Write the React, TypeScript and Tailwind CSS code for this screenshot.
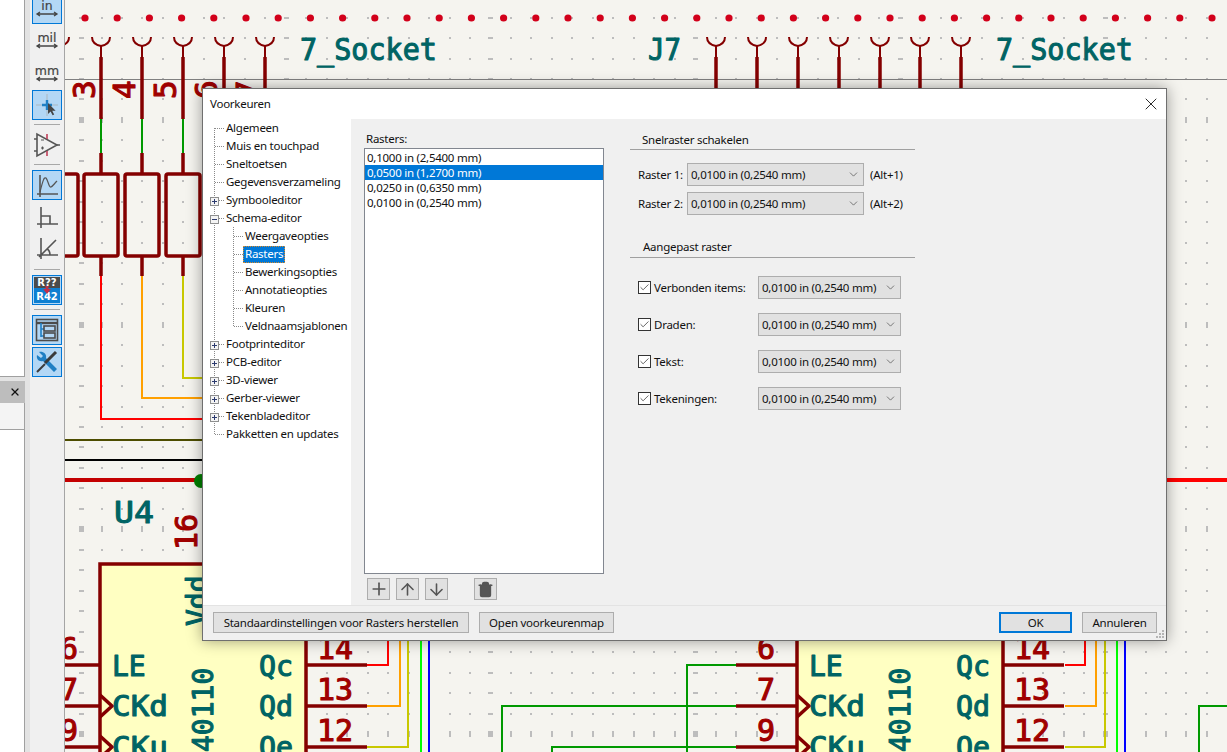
import { Check, ChevronDown, Plus, ArrowUp, ArrowDown, Trash2, X } from 'lucide-react';

const UI_FONT = "font-['Noto_Sans',sans-serif]";
const RED = '#840000';
const LABEL = '#006464';
const PIN_TEXT = '#a00000';
const MONO = "'DejaVu Sans Mono', monospace";

const treeRows = [
  { label: 'Algemeen', level: 0 },
  { label: 'Muis en touchpad', level: 0 },
  { label: 'Sneltoetsen', level: 0 },
  { label: 'Gegevensverzameling', level: 0 },
  { label: 'Symbooleditor', level: 0, box: 'plus' },
  { label: 'Schema-editor', level: 0, box: 'minus' },
  { label: 'Weergaveopties', level: 1 },
  { label: 'Rasters', level: 1, selected: true },
  { label: 'Bewerkingsopties', level: 1 },
  { label: 'Annotatieopties', level: 1 },
  { label: 'Kleuren', level: 1 },
  { label: 'Veldnaamsjablonen', level: 1, last: true },
  { label: 'Footprinteditor', level: 0, box: 'plus' },
  { label: 'PCB-editor', level: 0, box: 'plus' },
  { label: '3D-viewer', level: 0, box: 'plus' },
  { label: 'Gerber-viewer', level: 0, box: 'plus' },
  { label: 'Tekenbladeditor', level: 0, box: 'plus' },
  { label: 'Pakketten en updates', level: 0, last: true },
];

const gridSizes = [
  { text: '0,1000 in (2,5400 mm)' },
  { text: '0,0500 in (1,2700 mm)', selected: true },
  { text: '0,0250 in (0,6350 mm)' },
  { text: '0,0100 in (0,2540 mm)' },
];

const GRID_VALUE = '0,0100 in (0,2540 mm)';

const TreeGutter = ({ row, index }: { row: (typeof treeRows)[number]; index: number }) => {
  const dots = { stroke: '#8a8a8a', strokeDasharray: '1 1', shapeRendering: 'crispEdges' as const };
  const width = row.level === 0 ? 23 : 42;
  return (
    <svg width={width} height={18} className="shrink-0">
      {/* x=11 is the root trunk, it stops at the last root row */}
      {row.level === 1 || !row.last ? <line x1="11.5" y1={index === 0 ? 9 : 0} x2="11.5" y2="18" {...dots} /> : <line x1="11.5" y1="0" x2="11.5" y2="9" {...dots} />}
      {row.level === 0 && <line x1="12" y1="9.5" x2="21" y2="9.5" {...dots} />}
      {row.level === 1 && (
        <>
          <line x1="30.5" y1="0" x2="30.5" y2={row.last ? 9 : 18} {...dots} />
          <line x1="31" y1="9.5" x2="40" y2="9.5" {...dots} />
        </>
      )}
      {row.box && (
        <g shapeRendering="crispEdges">
          <rect x="7.5" y="6.5" width="8" height="8" fill="#f4f4f4" stroke="#8e8f8f" />
          <line x1="9" y1="10.5" x2="14" y2="10.5" stroke="#2b3a6e" />
          {row.box === 'plus' && <line x1="11.5" y1="8" x2="11.5" y2="13" stroke="#2b3a6e" />}
        </g>
      )}
    </svg>
  );
};

const TreePanel = () => (
  <div className="w-[148px] shrink-0 bg-white">
    {treeRows.map((row, idx) => (
      <div key={row.label} className="flex h-[18px] items-center whitespace-nowrap">
        <TreeGutter row={row} index={idx} />
        <span
          className={
            row.selected
              ? '-ml-[2px] flex h-[17px] items-center border border-dotted border-[#d98a2b] bg-[#0078d7] px-px text-white'
              : ''
          }
        >
          {row.label}
        </span>
      </div>
    ))}
  </div>
);

const Select = ({ width }: { width: string }) => (
  <div className={`flex h-[23px] items-center justify-between border border-[#adadad] bg-[#e1e1e1] pl-[3px] pr-[3px] ${width}`}>
    <span className="whitespace-nowrap pt-px">{GRID_VALUE}</span>
    <ChevronDown size={13} strokeWidth={1.25} className="text-[#444]" />
  </div>
);

const SectionTitle = ({ children, className }: { children: string; className: string }) => (
  <div className={`w-[285px] border-b border-[#a0a0a0] ${className}`}>{children}</div>
);

const CheckRow = ({ label }: { label: string }) => (
  <div className="flex h-[23px] items-center">
    <span className="ml-2 flex h-[13px] w-[13px] shrink-0 items-center justify-center border border-[#333] bg-white">
      <Check size={11} strokeWidth={1.5} className="text-[#222]" />
    </span>
    <span className="ml-[3px] w-[104px] whitespace-nowrap pt-px">{label}</span>
    <Select width="w-[143px]" />
  </div>
);

const IconButton = ({ children, className }: { children: React.ReactNode; className?: string }) => (
  <div className={`flex h-[22px] w-[23px] items-center justify-center border border-[#adadad] bg-[#e1e1e1] text-[#555] ${className ?? ''}`}>
    {children}
  </div>
);

const FooterButton = ({ label, className }: { label: string; className: string }) => (
  <div className={`flex h-[21px] items-center justify-center bg-[#e1e1e1] pt-px whitespace-nowrap ${className}`}>
    {label}
  </div>
);

const Dialog = () => (
  <div
    className={`absolute left-[202px] top-[88px] flex h-[553px] w-[965px] flex-col border border-[#6f6f6f] bg-[#f0f0f0] text-[11.5px] leading-none text-[#111] shadow-[0_0_14px_rgba(0,0,0,0.38)] ${UI_FONT} tracking-[-0.25px]`}
  >
    <div className="flex h-[30px] shrink-0 items-center justify-between bg-white pl-[7px] pr-[5px]">
      <span>Voorkeuren</span>
      <X size={20} strokeWidth={1} className="text-black" />
    </div>
    <div className="flex min-h-0 flex-1">
      <TreePanel />
      <div className="flex flex-1">
        <div className="ml-[13px] w-[240px] pt-[14px]">
          <div className="h-[15px] pl-[2px]">Rasters:</div>
          <div className="h-[426px] border border-[#828790] bg-white pt-px">
            {gridSizes.map((item) => (
              <div
                key={item.text}
                className={`flex h-[15px] items-center whitespace-nowrap pl-[2px] ${item.selected ? 'bg-[#0078d7] text-white' : ''}`}
              >
                {item.text}
              </div>
            ))}
          </div>
          <div className="mt-[4px] flex pl-[3px]">
            <IconButton>
              <Plus size={20} strokeWidth={2} />
            </IconButton>
            <IconButton className="ml-[6px]">
              <ArrowUp size={19} strokeWidth={2} />
            </IconButton>
            <IconButton className="ml-[6px]">
              <ArrowDown size={19} strokeWidth={2} />
            </IconButton>
            <IconButton className="ml-[26px]">
              <Trash2 size={17} strokeWidth={2} fill="#555" />
            </IconButton>
          </div>
        </div>
        <div className="ml-[26px] w-[285px]">
          <SectionTitle className="mt-[15px] h-[16px] pl-3">Snelraster schakelen</SectionTitle>
          <div className="mt-[13px] flex h-[23px] items-center">
            <span className="w-[57px] pl-2 pt-px whitespace-nowrap">Raster 1:</span>
            <Select width="w-[177px]" />
            <span className="ml-[6px] pt-px whitespace-nowrap">(Alt+1)</span>
          </div>
          <div className="mt-[6px] flex h-[23px] items-center">
            <span className="w-[57px] pl-2 pt-px whitespace-nowrap">Raster 2:</span>
            <Select width="w-[177px]" />
            <span className="ml-[6px] pt-px whitespace-nowrap">(Alt+2)</span>
          </div>
          <SectionTitle className="mt-[26px] h-[17px] pl-[13px]">Aangepast raster</SectionTitle>
          <div className="mt-[18px] flex flex-col gap-[14px]">
            <CheckRow label="Verbonden items:" />
            <CheckRow label="Draden:" />
            <CheckRow label="Tekst:" />
            <CheckRow label="Tekeningen:" />
          </div>
        </div>
      </div>
    </div>
    <div className="relative flex h-[35px] shrink-0 items-start border-t border-[#e3e3e3] pl-[10px] pr-[9px] pt-[6px]">
      <FooterButton label="Standaardinstellingen voor Rasters herstellen" className="w-[256px] border border-[#adadad]" />
      <FooterButton label="Open voorkeurenmap" className="ml-[10px] w-[135px] border border-[#adadad]" />
      <div className="flex-1" />
      <FooterButton label="OK" className="w-[73px] border-2 border-[#0078d7]" />
      <FooterButton label="Annuleren" className="ml-[10px] w-[75px] border border-[#adadad]" />
      <svg width="9" height="9" className="absolute bottom-px right-px" fill="#b5b5b5">
        <rect x="6" y="0" width="2" height="2" />
        <rect x="3" y="3" width="2" height="2" />
        <rect x="6" y="3" width="2" height="2" />
        <rect x="0" y="6" width="2" height="2" />
        <rect x="3" y="6" width="2" height="2" />
        <rect x="6" y="6" width="2" height="2" />
      </svg>
    </div>
  </div>
);

const ToolSlot = ({ active, height, children }: { active?: boolean; height: string; children: React.ReactNode }) => (
  <div className={`mx-[2px] flex w-[30px] items-center justify-center ${height} ${active ? 'border border-[#0078d7] bg-[#b3d7f5]' : ''}`}>
    {children}
  </div>
);

const UnitIcon = ({ text }: { text: string }) => (
  <svg width="26" height="26" viewBox="0 0 26 26" fill="#444" stroke="#444">
    <text x="13" y="14" textAnchor="middle" fontSize="12.5" stroke="#444" strokeWidth="0.2" fontFamily="'DejaVu Sans', sans-serif">
      {text}
    </text>
    <path d="M3 18h20M6 16 3 18l3 2M20 16l3 2-3 2" fill="none" strokeWidth="1.3" />
  </svg>
);

const Toolbar = () => (
  <div className="flex w-[35px] shrink-0 flex-col items-center overflow-hidden border-r border-[#a5a5a5] bg-[#f0f0f0]">
    <div className="-mt-[6px] flex flex-col">
      <ToolSlot active height="h-[30px]">
        <UnitIcon text="in" />
      </ToolSlot>
      <ToolSlot height="h-[33px]">
        <UnitIcon text="mil" />
      </ToolSlot>
      <ToolSlot height="h-[33px]">
        <UnitIcon text="mm" />
      </ToolSlot>
      <ToolSlot active height="h-[30px]">
        <svg width="26" height="26" viewBox="0 0 26 26">
          <path d="M13 2v22M2 13h22" stroke="#aaa" strokeWidth="0.7" />
          <path d="M13 8v10M8 13h10" stroke="#1f7fc4" strokeWidth="2.4" />
          <path d="M14 11v11l2.6-2.4 2 3.6 1.6-.8-2-3.6h3.4z" fill="#444" />
        </svg>
      </ToolSlot>
      <div className="mx-[4px] mt-[4px] h-px bg-[#a8a8a8]" />
      <div className="flex h-[39px] items-center justify-center">
        <svg width="28" height="28" viewBox="0 0 28 28" fill="none" stroke="#555" strokeWidth="1.6">
          <path d="M4 3v22l20-11z" />
          <path d="M1 8h3M1 20h3M24 14h3" />
          <path d="M8 9h3M8 17h3M9.5 15.5v3" strokeWidth="1.2" />
          <path d="M14 3v5M14 20v5" stroke="#c0405a" />
        </svg>
      </div>
      <div className="mx-[4px] h-px bg-[#a8a8a8]" />
      <div className="h-[5px]" />
      <ToolSlot active height="h-[30px]">
        <svg width="26" height="26" viewBox="0 0 26 26" fill="none" stroke="#555" strokeWidth="1.6">
          <path d="M3 22h21M6 3v22" />
          <path d="M6 20C9 8 10 5 12 6c2 2 3 10 5 9s3-3 6-6" strokeWidth="1.2" />
        </svg>
      </ToolSlot>
      <div className="flex h-[32px] items-center justify-center">
        <svg width="26" height="26" viewBox="0 0 26 26" fill="none" stroke="#555" strokeWidth="1.6">
          <path d="M3 21h21M7 4v21M7 13h9v8" />
        </svg>
      </div>
      <div className="flex h-[30px] items-center justify-center">
        <svg width="26" height="26" viewBox="0 0 26 26" fill="none" stroke="#555" strokeWidth="1.6">
          <path d="M3 21h21M7 4v21M5 23 22 6M13 15c2 1 3 3 3 6" />
        </svg>
      </div>
      <div className="mx-[4px] mt-[7px] h-px bg-[#a8a8a8]" />
      <div className="h-[5px]" />
      <ToolSlot active height="h-[30px]">
        <div className="relative flex h-[26px] w-[26px] flex-col justify-between bg-[#0e7fd1]">
          <span className="bg-[#4b4b4b] text-center font-['DejaVu_Sans',sans-serif] text-[10px] font-bold leading-[11px] text-white">R??</span>
          <span className="text-center font-['DejaVu_Sans',sans-serif] text-[10px] font-bold leading-[12px] text-white">R42</span>
          <svg width="8" height="8" viewBox="0 0 8 8" className="absolute left-[9px] top-[9px]">
            <path d="M2.5 0h3v3H8L4 8 0 3h2.5z" fill="#c0304a" />
          </svg>
        </div>
      </ToolSlot>
      <div className="mx-[4px] mt-[4px] h-px bg-[#a8a8a8]" />
      <div className="h-[5px]" />
      <ToolSlot active height="h-[30px]">
        <svg width="24" height="24" viewBox="0 0 24 24" fill="none" stroke="#4b4b4b" strokeWidth="1.6">
          <rect x="1.5" y="1.5" width="21" height="21" />
          <path d="M1.5 5h21" strokeWidth="2.4" />
          <path d="M6 5v14M6 11h3M6 18h3" stroke="#1f7fc4" />
          <rect x="9" y="8" width="11" height="5" />
          <rect x="9" y="15" width="11" height="5" />
        </svg>
      </ToolSlot>
      <div className="h-[2px]" />
      <ToolSlot active height="h-[30px]">
        <svg width="26" height="26" viewBox="0 0 26 26" fill="none">
          <path d="M5 3 9 7l-2 2-4-3c-1 4 2 7 6 6l11 11 3-3L12 9c1-4-3-7-7-6z" fill="#1f7fc4" />
          <path d="M22 3 11 14" stroke="#3b3b3b" strokeWidth="3" />
          <path d="M11 15 3 23" stroke="#3b3b3b" strokeWidth="2" />
        </svg>
      </ToolSlot>
    </div>
  </div>
);

const LeftDock = () => (
  <div className="flex w-[30px] shrink-0 flex-col bg-[#e3e3e3]">
    <div className="h-[377px] w-[25px] border-b border-r border-[#a0a0a0] bg-white" />
    <div className="mt-[4px] flex h-[22px] w-[25px] items-center justify-end bg-[#bdbdbd] pr-1">
      <X size={12} strokeWidth={2.5} className="text-[#111]" />
    </div>
    <div className="h-[27px] w-[25px] border-b border-r border-[#a0a0a0] bg-[#f4f4f4]" />
    <div className="w-[25px] flex-1 border-r border-[#a0a0a0] bg-white" />
  </div>
);

const RotText = ({ x, y, children, size = 30, fill = PIN_TEXT }: { x: number; y: number; children: string; size?: number; fill?: string }) => (
  <text
    transform={`translate(${x} ${y}) rotate(-90)`}
    fontFamily={MONO}
    fontSize={size}
    fill={fill}
    stroke={fill}
    strokeWidth="1.1"
    strokeLinejoin="round"
  >
    {children}
  </text>
);

const SchText = ({ x, y, children, fill = LABEL, size = 30, len }: { x: number; y: number; children: string; fill?: string; size?: number; len?: number }) => (
  <text
    x={x}
    y={y}
    fontFamily={MONO}
    fontSize={size}
    fill={fill}
    stroke={fill}
    strokeWidth="1.1"
    strokeLinejoin="round"
    textLength={len}
    lengthAdjust={len ? 'spacingAndGlyphs' : undefined}
  >
    {children}
  </text>
);

const Socket = ({ x }: { x: number }) => (
  <g fill="none" stroke={RED}>
    <path d={`M${x - 9} 37c0 5 4 8 9 9 5-1 9-4 9-9`} strokeWidth="2" />
    <path d={`M${x} 46v11`} strokeWidth="2" />
    <path d={`M${x} 57v40`} strokeWidth="3.5" />
  </g>
);

const Resistor = ({ x, wire, wireBottom }: { x: number; wire: string; wireBottom: number }) => (
  <g fill="none">
    <path d={`M${x} 97v22`} stroke={RED} strokeWidth="3.5" />
    <path d={`M${x} 119v34`} stroke="#009900" strokeWidth="2" />
    <path d={`M${x} 153v20`} stroke={RED} strokeWidth="3.5" />
    <rect x={x - 17} y={174} width={34} height={82} rx="2" stroke={RED} strokeWidth="3.5" />
    <path d={`M${x} 256v20`} stroke={RED} strokeWidth="3.5" />
    <path d={`M${x} 276V${wireBottom}H210`} stroke={wire} strokeWidth="2" />
  </g>
);

// the 40110 counter symbol, drawn twice with a horizontal offset
const Counter = ({ dx, width }: { dx: number; width: number }) => (
  <g>
    <rect x={100 + dx} y={564} width={width} height={260} fill="#ffffc2" stroke={RED} strokeWidth="3.5" />
    <g stroke={RED} strokeWidth="3.5" fill="none">
      <path d={`M${39 + dx} 665H${100 + dx}M${39 + dx} 706H${100 + dx}M${39 + dx} 747H${100 + dx}`} />
      <path d={`M${100 + dx} 695 ${112 + dx} 706 ${100 + dx} 717M${100 + dx} 736 ${112 + dx} 747 ${100 + dx} 758`} />
      <path d={`M${100 + width + dx} 665h61M${100 + width + dx} 706h61M${100 + width + dx} 747h61`} />
    </g>
    <SchText x={60 + dx} y={659} fill={PIN_TEXT}>6</SchText>
    <SchText x={60 + dx} y={700} fill={PIN_TEXT}>7</SchText>
    <SchText x={60 + dx} y={741} fill={PIN_TEXT}>9</SchText>
    <SchText x={317 + dx} y={659} fill={PIN_TEXT}>14</SchText>
    <SchText x={317 + dx} y={700} fill={PIN_TEXT}>13</SchText>
    <SchText x={317 + dx} y={741} fill={PIN_TEXT}>12</SchText>
    <SchText x={112 + dx} y={676} size={28}>LE</SchText>
    <SchText x={112 + dx} y={716} size={28} len={56}>CKd</SchText>
    <SchText x={112 + dx} y={757} size={28} len={56}>CKu</SchText>
    <SchText x={259 + dx} y={676} size={28} len={34}>Qc</SchText>
    <SchText x={259 + dx} y={716} size={28} len={34}>Qd</SchText>
    <SchText x={259 + dx} y={757} size={28} len={34}>Qe</SchText>
    <RotText x={213 + dx} y={752} size={28} fill={LABEL}>40110</RotText>
  </g>
);

const Schematic = () => {
  const cols: number[] = [];
  for (let x = 60.6; x < 1227; x += 20.47) cols.push(Math.round(x));
  const rows: number[] = [];
  for (let y = 17.6; y < 752; y += 20.47) rows.push(Math.round(y));
  const reds: number[] = [];
  for (let x = 85; x < 1227; x += 32.2) reds.push(x);

  return (
    <svg width="1227" height="752" viewBox="0 0 1227 752" className="block">
      <g transform="translate(-65 0)">
        <rect x="0" y="0" width="1227" height="752" fill="#f5f4ef" />
        <g fill="#bdbdbd" shapeRendering="crispEdges">
          {rows.map((y, ri) =>
            cols.map((x, ci) => {
              const wide = ci % 10 === 1;
              const tall = ri % 10 === 5;
              return <rect key={`${x}-${y}`} x={wide ? x - 2 : x - 1} y={tall ? y - 3 : y - 1} width={wide ? 5 : 2} height={tall ? 6 : 2} />;
            }),
          )}
        </g>
        <g fill="#d2001a">
          {reds.map((x) => (
            <circle key={x} cx={x} cy={18} r={3.6} />
          ))}
        </g>
        <path d="M65 79.5H1227" stroke="#808080" />

        {[60, 101, 142, 183, 224, 265, 716, 757, 798, 839, 880, 920, 961].map((x) => (
          <Socket key={x} x={x} />
        ))}
        <SchText x={300} y={60} size={31} len={137}>7_Socket</SchText>
        <SchText x={996} y={60} size={31} len={137}>7_Socket</SchText>
        <SchText x={648} y={60} size={31} len={33}>J7</SchText>

        <RotText x={95} y={99} size={31}>3</RotText>
        <RotText x={135} y={99} size={31}>4</RotText>
        <RotText x={176} y={99} size={31}>5</RotText>
        <RotText x={217} y={99} size={31}>6</RotText>
        <RotText x={258} y={99} size={31}>7</RotText>

        <rect x={48} y={174} width={30} height={82} rx="2" fill="none" stroke={RED} strokeWidth="3.5" />
        <Resistor x={101} wire="#ff0000" wireBottom={419} />
        <Resistor x={142} wire="#ffa000" wireBottom={398} />
        <Resistor x={183} wire="#c8c800" wireBottom={378} />

        <path d="M65 440H210" stroke="#4d4d00" strokeWidth="2" />
        <path d="M65 460H210" stroke="#000" strokeWidth="2" />
        <path d="M65 480H210" stroke="#c40000" strokeWidth="4" />
        <circle cx={201} cy={481} r={7} fill="#007f00" />
        <path d="M1160 480H1227" stroke="#ff0000" strokeWidth="4" />

        <SchText x={114} y={523} size={31} len={40}>U4</SchText>
        <RotText x={197} y={550} size={30}>16</RotText>

        <g fill="none" strokeWidth="2">
          <path d="M367 665H388V620" stroke="#ff0000" />
          <path d="M367 706H400V620" stroke="#ffa000" />
          <path d="M367 747H408V620" stroke="#c8c800" />
          <path d="M421 620V752" stroke="#00ff00" />
          <path d="M429 620V752" stroke="#0000ff" />
          <path d="M1065 665H1085V620" stroke="#ff0000" />
          <path d="M1065 706H1096V620" stroke="#ffa000" />
          <path d="M1065 747H1105V620" stroke="#c8c800" />
          <path d="M1117 620V752" stroke="#00ff00" />
          <path d="M1125 620V752" stroke="#0000ff" />
          <path d="M736 665H687V752" stroke="#009900" />
          <path d="M736 706H502V752" stroke="#009900" />
          <path d="M736 747H552V752" stroke="#009900" />
          <path d="M1227 706H1199V752" stroke="#009900" />
        </g>

        <Counter dx={0} width={206} />
        <Counter dx={697} width={206} />
        <RotText x={207} y={626} size={28} fill={LABEL}>Vdd</RotText>
      </g>
    </svg>
  );
};

const App = () => (
  <div className="relative flex h-[752px] w-[1227px] overflow-hidden">
    <LeftDock />
    <Toolbar />
    <div className="flex-1 overflow-hidden">
      <Schematic />
    </div>
    <Dialog />
  </div>
);

export default App;
